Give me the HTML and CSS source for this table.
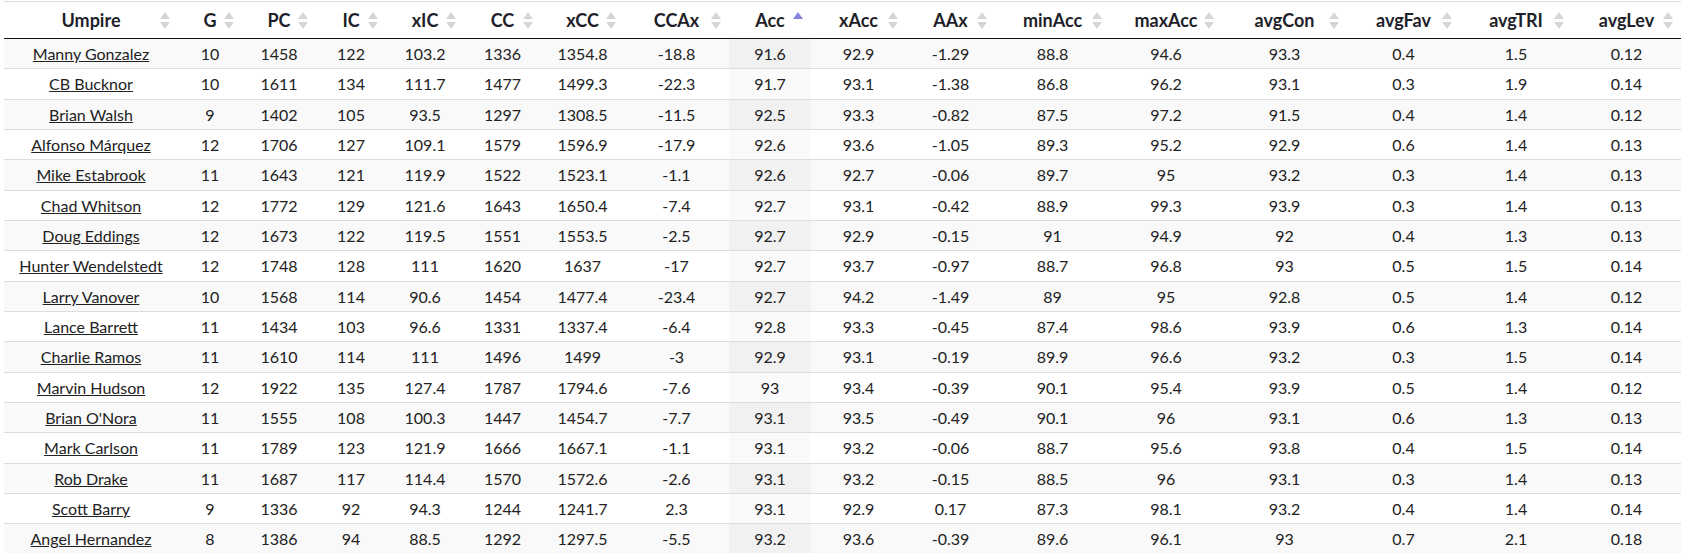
FILE: index.html
```html
<!DOCTYPE html>
<html lang="en">
<head>
<meta charset="utf-8">
<title>Umpire accuracy</title>
<link rel="stylesheet" href="styles.css">
</head>
<body>
<table class="grid">
  <colgroup>
    <col class="w-ump"><col class="w-g"><col class="w-pc"><col class="w-ic"><col class="w-xic"><col class="w-cc"><col class="w-xcc"><col class="w-ccax"><col class="w-acc"><col class="w-xacc"><col class="w-aax"><col class="w-min"><col class="w-max"><col class="w-con"><col class="w-fav"><col class="w-tri"><col class="w-lev">
  </colgroup>
  <thead>
    <tr>
      <th>Umpire<span class="sort"></span></th>
      <th>G<span class="sort"></span></th>
      <th>PC<span class="sort"></span></th>
      <th>IC<span class="sort"></span></th>
      <th>xIC<span class="sort"></span></th>
      <th>CC<span class="sort"></span></th>
      <th>xCC<span class="sort"></span></th>
      <th>CCAx<span class="sort"></span></th>
      <th>Acc<span class="sort asc"></span></th>
      <th>xAcc<span class="sort"></span></th>
      <th>AAx<span class="sort"></span></th>
      <th>minAcc<span class="sort"></span></th>
      <th>maxAcc<span class="sort"></span></th>
      <th>avgCon<span class="sort"></span></th>
      <th>avgFav<span class="sort"></span></th>
      <th>avgTRI<span class="sort"></span></th>
      <th>avgLev<span class="sort"></span></th>
    </tr>
  </thead>
  <tbody>
    <tr><td><a href="#">Manny Gonzalez</a></td><td>10</td><td>1458</td><td>122</td><td>103.2</td><td>1336</td><td>1354.8</td><td>-18.8</td><td class="sorted">91.6</td><td>92.9</td><td>-1.29</td><td>88.8</td><td>94.6</td><td>93.3</td><td>0.4</td><td>1.5</td><td>0.12</td></tr>
    <tr><td><a href="#">CB Bucknor</a></td><td>10</td><td>1611</td><td>134</td><td>111.7</td><td>1477</td><td>1499.3</td><td>-22.3</td><td class="sorted">91.7</td><td>93.1</td><td>-1.38</td><td>86.8</td><td>96.2</td><td>93.1</td><td>0.3</td><td>1.9</td><td>0.14</td></tr>
    <tr><td><a href="#">Brian Walsh</a></td><td>9</td><td>1402</td><td>105</td><td>93.5</td><td>1297</td><td>1308.5</td><td>-11.5</td><td class="sorted">92.5</td><td>93.3</td><td>-0.82</td><td>87.5</td><td>97.2</td><td>91.5</td><td>0.4</td><td>1.4</td><td>0.12</td></tr>
    <tr><td><a href="#">Alfonso Márquez</a></td><td>12</td><td>1706</td><td>127</td><td>109.1</td><td>1579</td><td>1596.9</td><td>-17.9</td><td class="sorted">92.6</td><td>93.6</td><td>-1.05</td><td>89.3</td><td>95.2</td><td>92.9</td><td>0.6</td><td>1.4</td><td>0.13</td></tr>
    <tr><td><a href="#">Mike Estabrook</a></td><td>11</td><td>1643</td><td>121</td><td>119.9</td><td>1522</td><td>1523.1</td><td>-1.1</td><td class="sorted">92.6</td><td>92.7</td><td>-0.06</td><td>89.7</td><td>95</td><td>93.2</td><td>0.3</td><td>1.4</td><td>0.13</td></tr>
    <tr><td><a href="#">Chad Whitson</a></td><td>12</td><td>1772</td><td>129</td><td>121.6</td><td>1643</td><td>1650.4</td><td>-7.4</td><td class="sorted">92.7</td><td>93.1</td><td>-0.42</td><td>88.9</td><td>99.3</td><td>93.9</td><td>0.3</td><td>1.4</td><td>0.13</td></tr>
    <tr><td><a href="#">Doug Eddings</a></td><td>12</td><td>1673</td><td>122</td><td>119.5</td><td>1551</td><td>1553.5</td><td>-2.5</td><td class="sorted">92.7</td><td>92.9</td><td>-0.15</td><td>91</td><td>94.9</td><td>92</td><td>0.4</td><td>1.3</td><td>0.13</td></tr>
    <tr><td><a href="#">Hunter Wendelstedt</a></td><td>12</td><td>1748</td><td>128</td><td>111</td><td>1620</td><td>1637</td><td>-17</td><td class="sorted">92.7</td><td>93.7</td><td>-0.97</td><td>88.7</td><td>96.8</td><td>93</td><td>0.5</td><td>1.5</td><td>0.14</td></tr>
    <tr><td><a href="#">Larry Vanover</a></td><td>10</td><td>1568</td><td>114</td><td>90.6</td><td>1454</td><td>1477.4</td><td>-23.4</td><td class="sorted">92.7</td><td>94.2</td><td>-1.49</td><td>89</td><td>95</td><td>92.8</td><td>0.5</td><td>1.4</td><td>0.12</td></tr>
    <tr><td><a href="#">Lance Barrett</a></td><td>11</td><td>1434</td><td>103</td><td>96.6</td><td>1331</td><td>1337.4</td><td>-6.4</td><td class="sorted">92.8</td><td>93.3</td><td>-0.45</td><td>87.4</td><td>98.6</td><td>93.9</td><td>0.6</td><td>1.3</td><td>0.14</td></tr>
    <tr><td><a href="#">Charlie Ramos</a></td><td>11</td><td>1610</td><td>114</td><td>111</td><td>1496</td><td>1499</td><td>-3</td><td class="sorted">92.9</td><td>93.1</td><td>-0.19</td><td>89.9</td><td>96.6</td><td>93.2</td><td>0.3</td><td>1.5</td><td>0.14</td></tr>
    <tr><td><a href="#">Marvin Hudson</a></td><td>12</td><td>1922</td><td>135</td><td>127.4</td><td>1787</td><td>1794.6</td><td>-7.6</td><td class="sorted">93</td><td>93.4</td><td>-0.39</td><td>90.1</td><td>95.4</td><td>93.9</td><td>0.5</td><td>1.4</td><td>0.12</td></tr>
    <tr><td><a href="#">Brian O'Nora</a></td><td>11</td><td>1555</td><td>108</td><td>100.3</td><td>1447</td><td>1454.7</td><td>-7.7</td><td class="sorted">93.1</td><td>93.5</td><td>-0.49</td><td>90.1</td><td>96</td><td>93.1</td><td>0.6</td><td>1.3</td><td>0.13</td></tr>
    <tr><td><a href="#">Mark Carlson</a></td><td>11</td><td>1789</td><td>123</td><td>121.9</td><td>1666</td><td>1667.1</td><td>-1.1</td><td class="sorted">93.1</td><td>93.2</td><td>-0.06</td><td>88.7</td><td>95.6</td><td>93.8</td><td>0.4</td><td>1.5</td><td>0.14</td></tr>
    <tr><td><a href="#">Rob Drake</a></td><td>11</td><td>1687</td><td>117</td><td>114.4</td><td>1570</td><td>1572.6</td><td>-2.6</td><td class="sorted">93.1</td><td>93.2</td><td>-0.15</td><td>88.5</td><td>96</td><td>93.1</td><td>0.3</td><td>1.4</td><td>0.13</td></tr>
    <tr><td><a href="#">Scott Barry</a></td><td>9</td><td>1336</td><td>92</td><td>94.3</td><td>1244</td><td>1241.7</td><td>2.3</td><td class="sorted">93.1</td><td>92.9</td><td>0.17</td><td>87.3</td><td>98.1</td><td>93.2</td><td>0.4</td><td>1.4</td><td>0.14</td></tr>
    <tr><td><a href="#">Angel Hernandez</a></td><td>8</td><td>1386</td><td>94</td><td>88.5</td><td>1292</td><td>1297.5</td><td>-5.5</td><td class="sorted">93.2</td><td>93.6</td><td>-0.39</td><td>89.6</td><td>96.1</td><td>93</td><td>0.7</td><td>2.1</td><td>0.18</td></tr>
  </tbody>
</table>
</body>
</html>
```
FILE: styles.css
```css
html {
  overflow: hidden;
}

body {
  margin: 1px 4px 0;
  font-family: Lato, "Noto Sans", sans-serif;
  color: #222;
  background: #fff;
}

.grid {
  width: 1677px;
  table-layout: fixed;
  border-collapse: separate;
  border-spacing: 0;
}

.w-ump { width: 174px; }
.w-g { width: 64px; }
.w-pc { width: 74px; }
.w-ic { width: 70px; }
.w-xic { width: 78px; }
.w-cc { width: 77px; }
.w-xcc { width: 83px; }
.w-ccax { width: 105px; }
.w-acc { width: 82px; }
.w-xacc { width: 95px; }
.w-aax { width: 89px; }
.w-min { width: 115px; }
.w-max { width: 112px; }
.w-con { width: 125px; }
.w-fav { width: 113px; }
.w-tri { width: 112px; }
.w-lev { width: 109px; }

.grid th {
  position: relative;
  height: 36px;
  padding: 0;
  border-top: 1px solid #dddddd;
  border-bottom: 1px solid #111111;
  font-size: 18px;
  font-weight: 700;
  text-align: center;
  vertical-align: middle;
  color: #1f1f2b;
  white-space: nowrap;
}

.sort {
  position: absolute;
  top: 9px;
  right: 8px;
  width: 10px;
  height: 18px;
}

.sort::before,
.sort::after {
  content: "";
  position: absolute;
  left: 0;
  width: 0;
  height: 0;
  border-left: 5px solid transparent;
  border-right: 5px solid transparent;
}

.sort::before {
  top: 1px;
  border-bottom: 7px solid #d6d6d6;
}

.sort::after {
  top: 11px;
  border-top: 7px solid #d6d6d6;
}

.sort.asc::before {
  border-bottom-color: #8484de;
}

.sort.asc::after {
  display: none;
}

.grid td {
  padding: 4px 8px;
  line-height: 21.33px;
  font-size: 16px;
  text-align: center;
  border-bottom: 1px solid #dddddd;
  color: #222;
  white-space: nowrap;
}

.grid tbody tr:nth-child(odd) td {
  background: #f9f9f9;
}

.grid tbody tr:nth-child(odd) td.sorted {
  background: #f1f1f1;
}

.grid tbody tr:nth-child(even) td.sorted {
  background: #fafafa;
}

.grid a {
  color: #222;
  text-decoration: underline;
}
```
